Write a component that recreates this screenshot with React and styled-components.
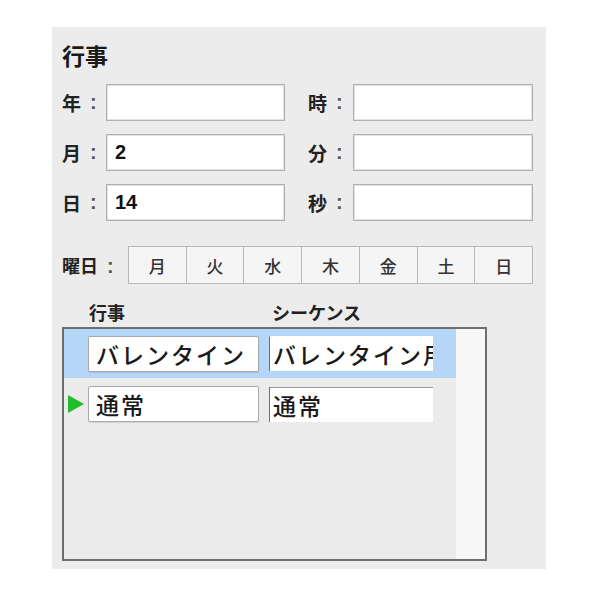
import React from "react";
import styled, { createGlobalStyle } from "styled-components";

const GlobalStyle = createGlobalStyle`
  body {
    margin: 0;
    background: #ffffff;
    font-family: "Noto Sans CJK JP", "Liberation Sans", sans-serif;
    color: #1a1a1a;
  }
`;

const Page = styled.div`
  padding: 27px 0 0 52px;
`;

const Panel = styled.div`
  width: 494px;
  height: 542px;
  box-sizing: border-box;
  background: #ececec;
  padding: 14px 0 0 10px;
`;

const Title = styled.div`
  font-size: 23px;
  font-weight: 700;
  line-height: 28px;
  height: 28px;
`;

const FieldGrid = styled.div`
  display: grid;
  grid-template-columns: 44px 179px 23px 45px 180px;
  grid-auto-rows: 37px;
  row-gap: 13px;
  margin-top: 15px;
`;

const Label = styled.div`
  display: flex;
  align-items: center;
  font-size: 19px;
  font-weight: 700;
  color: #222;
  grid-column: ${(p) => p.col};
`;

const Colon = styled.span`
  margin-left: 9px;
  font-family: "Liberation Sans", sans-serif;
  font-size: 20px;
  font-weight: 700;
  color: #555;
`;

const TextBox = styled.div`
  grid-column: ${(p) => p.col};
  box-sizing: border-box;
  background: #ffffff;
  border: 1px solid #b0b0b0;
  box-shadow: inset 0 0 0 1px #e2e2e2;
  display: flex;
  align-items: center;
  padding-left: 8px;
  font-family: "Liberation Sans", sans-serif;
  font-size: 20px;
  font-weight: 700;
  color: #111;
`;

const WeekRow = styled.div`
  display: flex;
  align-items: center;
  margin-top: 25px;
  height: 38px;
`;

const WeekLabel = styled.div`
  width: 66px;
  font-size: 18px;
  font-weight: 700;
  color: #222;
`;

const WeekButtons = styled.div`
  display: flex;
  width: 405px;
`;

const DayButton = styled.div`
  flex: 1;
  height: 38px;
  box-sizing: border-box;
  border: 1px solid #b8b8b8;
  margin-left: -1px;
  background: #f5f5f5;
  display: flex;
  align-items: center;
  justify-content: center;
  font-size: 17px;
  font-weight: 500;
  color: #333;
  &:first-child {
    margin-left: 0;
  }
`;

const HeaderRow = styled.div`
  display: flex;
  margin-top: 12px;
  height: 31px;
  align-items: center;
  font-size: 18px;
  font-weight: 700;
  color: #222;
`;

const HeaderCell = styled.div`
  width: ${(p) => p.w}px;
  padding-left: ${(p) => p.pad}px;
`;

const Table = styled.div`
  width: 425px;
  height: 234px;
  box-sizing: border-box;
  border: 2px solid #6e6e6e;
  display: flex;
  background: #ebebeb;
`;

const TableBody = styled.div`
  flex: 1;
`;

const Scrollbar = styled.div`
  width: 29px;
  background: #f7f7f7;
`;

const Row = styled.div`
  display: flex;
  align-items: center;
  height: ${(p) => p.h}px;
  background: ${(p) => (p.selected ? "#b6d6f7" : "transparent")};
`;

const Marker = styled.div`
  width: 24px;
  display: flex;
  align-items: center;
  justify-content: center;
`;

const EventCell = styled.div`
  width: 171px;
  height: 36px;
  box-sizing: border-box;
  background: #ffffff;
  border: 1px solid #a8a8a8;
  border-radius: 2px;
  box-shadow: 0 1px 1px rgba(0, 0, 0, 0.1);
  display: flex;
  align-items: center;
  padding-left: 7px;
  font-size: 23px;
  letter-spacing: 2px;
  font-weight: 500;
  color: #1a1a1a;
  white-space: nowrap;
  overflow: hidden;
`;

const SeqCell = styled.div`
  width: 164px;
  height: 35px;
  margin-left: 10px;
  box-sizing: border-box;
  background: #ffffff;
  border-top: 1px solid ${(p) => (p.selected ? "#ffffff" : "#9a9a9a")};
  border-left: 1px solid #707070;
  display: flex;
  align-items: center;
  padding-left: 3px;
  font-size: 23px;
  letter-spacing: 2px;
  font-weight: 500;
  color: #1a1a1a;
  white-space: nowrap;
  overflow: hidden;
`;

const fields = [
  { left: "年", right: "時", value: "" },
  { left: "月", right: "分", value: "2" },
  { left: "日", right: "秒", value: "14" },
];

const days = ["月", "火", "水", "木", "金", "土", "日"];

const rows = [
  { event: "バレンタイン", seq: "バレンタイン用", selected: true, current: false },
  { event: "通常", seq: "通常", selected: false, current: true },
];

export default function App() {
  return (
    <Page>
      <GlobalStyle />
      <Panel>
        <Title>行事</Title>
        <FieldGrid>
          {fields.map((f) => (
            <React.Fragment key={f.left}>
              <Label col={1}>
                {f.left}
                <Colon>:</Colon>
              </Label>
              <TextBox col={2}>{f.value}</TextBox>
              <Label col={4}>
                {f.right}
                <Colon>:</Colon>
              </Label>
              <TextBox col={5} />
            </React.Fragment>
          ))}
        </FieldGrid>
        <WeekRow>
          <WeekLabel>
            曜日<Colon>:</Colon>
          </WeekLabel>
          <WeekButtons>
            {days.map((d) => (
              <DayButton key={d}>{d}</DayButton>
            ))}
          </WeekButtons>
        </WeekRow>
        <HeaderRow>
          <HeaderCell w={183} pad={27}>行事</HeaderCell>
          <HeaderCell w={200} pad={0}>シーケンス</HeaderCell>
        </HeaderRow>
        <Table>
          <TableBody>
            {rows.map((r, i) => (
              <Row key={i} selected={r.selected} h={i === 0 ? 49 : 52}>
                <Marker>
                  {r.current && (
                    <svg width="18" height="20" viewBox="0 0 18 20">
                      <polygon points="1,1 17,10 1,19" fill="#1fbf2a" />
                    </svg>
                  )}
                </Marker>
                <EventCell>{r.event}</EventCell>
                <SeqCell selected={r.selected}>{r.seq}</SeqCell>
              </Row>
            ))}
          </TableBody>
          <Scrollbar />
        </Table>
      </Panel>
    </Page>
  );
}
